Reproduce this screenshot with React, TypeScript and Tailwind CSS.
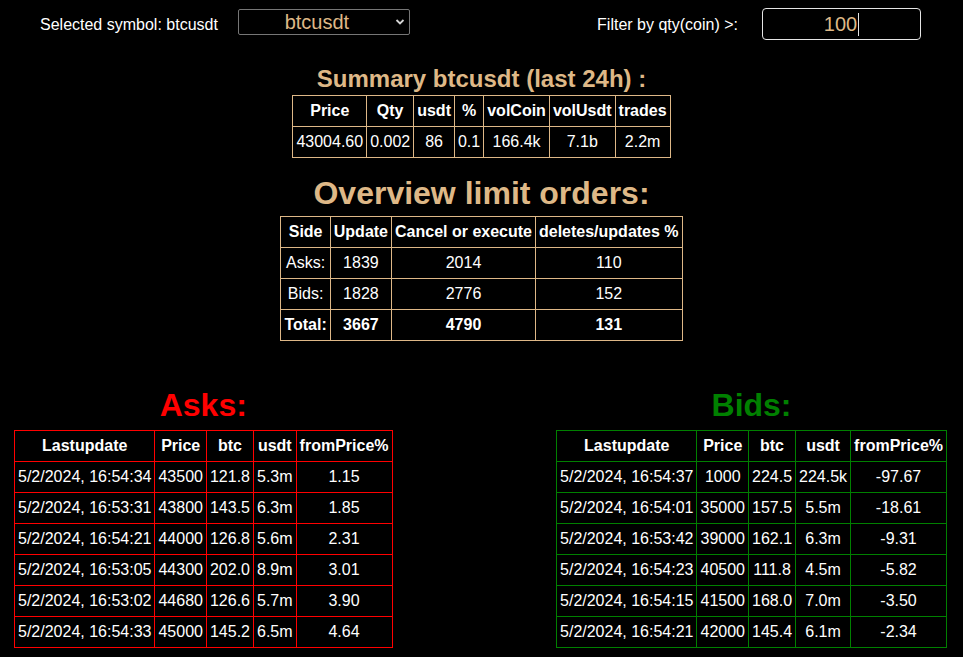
import React from 'react';

const summaryHead = ['Price', 'Qty', 'usdt', '%', 'volCoin', 'volUsdt', 'trades'];
const summaryRow = ['43004.60', '0.002', '86', '0.1', '166.4k', '7.1b', '2.2m'];

const overviewHead = ['Side', 'Update', 'Cancel or execute', 'deletes/updates %'];
const overviewRows = [
  ['Asks:', '1839', '2014', '110'],
  ['Bids:', '1828', '2776', '152'],
];
const overviewTotal = ['Total:', '3667', '4790', '131'];

const bookHead = ['Lastupdate', 'Price', 'btc', 'usdt', 'fromPrice%'];
const asks = [
  ['5/2/2024, 16:54:34', '43500', '121.8', '5.3m', '1.15'],
  ['5/2/2024, 16:53:31', '43800', '143.5', '6.3m', '1.85'],
  ['5/2/2024, 16:54:21', '44000', '126.8', '5.6m', '2.31'],
  ['5/2/2024, 16:53:05', '44300', '202.0', '8.9m', '3.01'],
  ['5/2/2024, 16:53:02', '44680', '126.6', '5.7m', '3.90'],
  ['5/2/2024, 16:54:33', '45000', '145.2', '6.5m', '4.64'],
];
const bids = [
  ['5/2/2024, 16:54:37', '1000', '224.5', '224.5k', '-97.67'],
  ['5/2/2024, 16:54:01', '35000', '157.5', '5.5m', '-18.61'],
  ['5/2/2024, 16:53:42', '39000', '162.1', '6.3m', '-9.31'],
  ['5/2/2024, 16:54:23', '40500', '111.8', '4.5m', '-5.82'],
  ['5/2/2024, 16:54:15', '41500', '168.0', '7.0m', '-3.50'],
  ['5/2/2024, 16:54:21', '42000', '145.4', '6.1m', '-2.34'],
];

const BookTable = ({ rows, border }: { rows: string[][]; border: string }) => (
  <table className={`border-collapse border text-[16px] leading-6 text-white ${border}`}>
    <thead>
      <tr>
        {bookHead.map(h => (
          <th key={h} className={`border p-[3px] font-bold ${border}`}>{h}</th>
        ))}
      </tr>
    </thead>
    <tbody>
      {rows.map((r, i) => (
        <tr key={i}>
          {r.map((c, j) => (
            <td key={j} className={`border p-[3px] text-center ${border}`}>{c}</td>
          ))}
        </tr>
      ))}
    </tbody>
  </table>
);

export default function App() {
  return (
    <div className="min-h-[657px] w-full bg-black text-white font-['Liberation_Sans',Arial,sans-serif] text-[16px]">
      {/* top controls */}
      <div className="flex items-start">
        <span className="ml-[40px] mt-[13px] leading-6">Selected symbol: btcusdt</span>
        <div className="relative ml-[20px] mt-[9px] h-[26px] w-[172px]">
          <select
            defaultValue="btcusdt"
            className="h-full w-full appearance-none rounded-[2px] border border-[#767676] bg-black pr-[14px] text-center text-[20px] leading-none text-[#deb887] outline-none"
          >
            <option value="btcusdt">btcusdt</option>
            <option value="ethusdt">ethusdt</option>
          </select>
          <svg
            className="pointer-events-none absolute right-[5px] top-[9px]"
            width="10"
            height="8"
            viewBox="0 0 10 8"
            fill="none"
          >
            <path d="M1.5 2 L5 5.5 L8.5 2" stroke="#d4d4d4" strokeWidth="1.8" />
          </svg>
        </div>
        <span className="ml-auto mt-[13px] leading-6">Filter by qty(coin) &gt;:</span>
        <div className="ml-[24px] mr-[42px] mt-[8px] flex h-[32px] w-[159px] items-center justify-center rounded-[4px] border border-[#e5e5e5] bg-black text-[20px] text-[#deb887]">
          <span>100</span>
          <span className="ml-[1px] h-[23px] w-[1px] bg-[#e5e5e5]" />
        </div>
      </div>

      {/* summary */}
      <h2 className="mt-[25px] text-center text-[24px] font-bold leading-[28px] text-[#deb887]">
        Summary btcusdt (last 24h) :
      </h2>
      <table className="mx-auto mt-[2px] border-collapse border border-[#deb887] text-[16px] leading-6">
        <thead>
          <tr>
            {summaryHead.map(h => (
              <th key={h} className="border border-[#deb887] p-[3px] font-bold">{h}</th>
            ))}
          </tr>
        </thead>
        <tbody>
          <tr>
            {summaryRow.map((c, i) => (
              <td key={i} className="border border-[#deb887] p-[3px] text-center">{c}</td>
            ))}
          </tr>
        </tbody>
      </table>

      {/* overview */}
      <h1 className="mt-[17px] text-center text-[32px] font-bold leading-[36px] text-[#deb887]">
        Overview limit orders:
      </h1>
      <table className="mx-auto mt-[5px] border-collapse border border-[#deb887] text-[16px] leading-6">
        <thead>
          <tr>
            {overviewHead.map(h => (
              <th key={h} className="border border-[#deb887] p-[3px] font-bold">{h}</th>
            ))}
          </tr>
        </thead>
        <tbody>
          {overviewRows.map((r, i) => (
            <tr key={i}>
              {r.map((c, j) => (
                <td key={j} className="border border-[#deb887] p-[3px] text-center">{c}</td>
              ))}
            </tr>
          ))}
          <tr>
            {overviewTotal.map((c, j) => (
              <td key={j} className="border border-[#deb887] p-[3px] text-center font-bold">{c}</td>
            ))}
          </tr>
        </tbody>
      </table>

      {/* order books */}
      <div className="mt-[46px] flex items-start justify-between pl-[14px] pr-[16px]">
        <div className="flex flex-col items-center">
          <h1 className="mb-[7px] text-[32px] font-bold leading-[36px] text-[#ff0000]">Asks:</h1>
          <BookTable rows={asks} border="border-[#ff0000]" />
        </div>
        <div className="flex flex-col items-center">
          <h1 className="mb-[7px] text-[32px] font-bold leading-[36px] text-[#008000]">Bids:</h1>
          <BookTable rows={bids} border="border-[#008000]" />
        </div>
      </div>
    </div>
  );
}
